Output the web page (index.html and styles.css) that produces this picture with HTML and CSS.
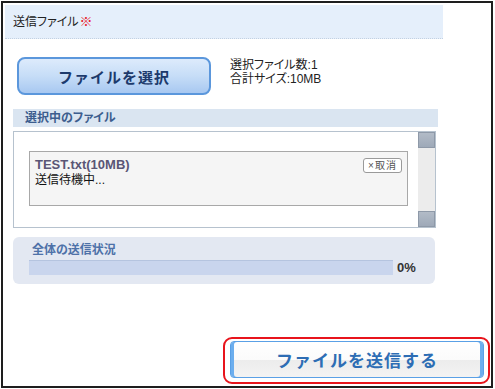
FILE: index.html
```html
<!DOCTYPE html>
<html lang="ja">
  <head>
    <meta charset="UTF-8" />
    <meta name="viewport" content="width=device-width, initial-scale=1.0" />
    <title>ファイル送信</title>
    <link rel="stylesheet" href="styles.css">
  </head>
  <body>
    <div class="frame">
      <div class="panel">
        <div class="head">送信ファイル<span class="req">※</span></div>

        <div class="select-row">
          <button class="btn-select">ファイルを選択</button>
          <div class="summary">
            <div>選択ファイル数:1</div>
            <div>合計サイズ:10MB</div>
          </div>
        </div>

        <div class="section-title">選択中のファイル</div>
        <div class="file-box">
          <div class="file-list">
            <div class="file-item">
              <div class="file-name">TEST.txt(10MB)</div>
              <div class="file-status">送信待機中...</div>
              <button class="btn-cancel">×取消</button>
            </div>
          </div>
          <div class="scrollbar">
            <div class="sb-btn"></div>
            <div class="sb-track"></div>
            <div class="sb-btn"></div>
          </div>
        </div>

        <div class="progress">
          <div class="progress-title">全体の送信状況</div>
          <div class="progress-row">
            <div class="bar"></div>
            <span class="pct">0%</span>
          </div>
        </div>
      </div>

      <div class="send-row">
        <div class="send-ring">
          <button class="btn-send">ファイルを送信する</button>
        </div>
      </div>
    </div>
  </body>
</html>
```

FILE: styles.css
```css
body {
  margin: 0;
  background-color: #fff;
  font-family: "Liberation Sans", "Noto Sans CJK JP", sans-serif;
  font-size: 12px;
  color: #222;
}

.frame {
  box-sizing: border-box;
  width: 492px;
  height: 387px;
  margin: 1px 0 0 1px;
  border: 2px solid #1e1e1e;
  background-color: #fff;
}

.panel {
  padding: 2px 0 0 2px;
  font-feature-settings: "palt";
}

.head {
  width: 430px;
  height: 33px;
  line-height: 33px;
  padding-left: 8px;
  background-color: #e5effb;
  border-bottom: 1px dotted #c3d1e2;
  font-size: 12px;
  color: #222;
}

.req {
  color: #e8202a;
  font-weight: bold;
  font-size: 13px;
  margin-left: 1px;
}

.select-row {
  display: flex;
  margin-top: 18px;
  padding-left: 12px;
}

button {
  font-family: "Liberation Sans", "Noto Sans CJK JP", sans-serif;
  font-feature-settings: normal;
  cursor: pointer;
  padding: 0;
}

.btn-select {
  box-sizing: border-box;
  width: 194px;
  height: 38px;
  border: 2px solid #5b97dc;
  border-radius: 8px;
  background: linear-gradient(#ddebfc, #c6ddf7 50%, #a8c8f1);
  color: #1c3a6c;
  font-size: 15px;
  font-weight: bold;
  letter-spacing: 1px;
}

.summary {
  margin-left: 19px;
  padding-top: 1px;
  line-height: 14px;
  font-size: 12px;
  color: #222;
}

.section-title {
  width: 413px;
  height: 18px;
  line-height: 18px;
  margin: 14px 0 0 8px;
  padding-left: 12px;
  background-color: #dae5f1;
  color: #3c5d8e;
  font-weight: bold;
  font-size: 12px;
}

.file-box {
  box-sizing: border-box;
  display: flex;
  width: 423px;
  height: 97px;
  margin: 4px 0 0 8px;
  border: 1px solid #b6c2ce;
  background-color: #fff;
}

.file-list {
  flex: 1;
  padding: 19px 10px 0 15px;
}

.file-item {
  position: relative;
  box-sizing: border-box;
  height: 55px;
  padding: 5px 0 0 5px;
  border: 1px solid #a8a8a8;
  background-color: #f5f5f5;
}

.file-name {
  font-size: 13px;
  font-weight: bold;
  line-height: 16px;
  color: #5a5676;
}

.file-status {
  font-size: 12px;
  line-height: 15px;
  color: #111;
}

.btn-cancel {
  position: absolute;
  top: 6px;
  right: 5px;
  box-sizing: border-box;
  width: 39px;
  height: 15px;
  border: 1px solid #9a9a9a;
  border-radius: 3px;
  background-color: #fff;
  color: #555;
  font-size: 10px;
  line-height: 12px;
  letter-spacing: 1px;
}

.scrollbar {
  display: flex;
  flex-direction: column;
  width: 17px;
}

.sb-btn {
  box-sizing: border-box;
  height: 16px;
  background: linear-gradient(#b2bbc7, #9ea9b8);
  border: 1px solid #8e99a8;
}

.sb-track {
  flex: 1;
  background-color: #ececec;
}

.progress {
  box-sizing: border-box;
  width: 422px;
  height: 47px;
  margin: 9px 0 0 8px;
  padding: 6px 0 0 16px;
  border-radius: 6px;
  background-color: #e3e8f2;
}

.progress-title {
  padding-left: 3px;
  line-height: 14px;
  font-size: 12px;
  font-weight: bold;
  color: #4d71a8;
}

.progress-row {
  display: flex;
  align-items: center;
  margin-top: 3px;
}

.bar {
  box-sizing: border-box;
  width: 364px;
  height: 15px;
  background-color: #c9d5ed;
  border-top: 1px solid #b5c4df;
}

.pct {
  margin-left: 4px;
  font-size: 13px;
  font-weight: bold;
  color: #333;
}

.send-row {
  display: flex;
  justify-content: flex-end;
  margin-top: 53px;
  padding-right: 1px;
}

.send-ring {
  box-sizing: border-box;
  width: 267px;
  height: 47px;
  padding: 2px 4px 4px 5px;
  border: 2px solid #e8141c;
  border-radius: 9px;
}

.btn-send {
  box-sizing: border-box;
  width: 254px;
  height: 37px;
  border: 1px solid #5aa0e6;
  border-radius: 4px;
  background: linear-gradient(#ffffff, #fbfbfb 50%, #ececec 51%, #f3f3f3);
  box-shadow: inset 3px 0 0 #6caeee, inset -3px 0 0 #6caeee;
  color: #2d6db4;
  font-size: 17px;
  font-weight: bold;
  letter-spacing: 1px;
}
```
